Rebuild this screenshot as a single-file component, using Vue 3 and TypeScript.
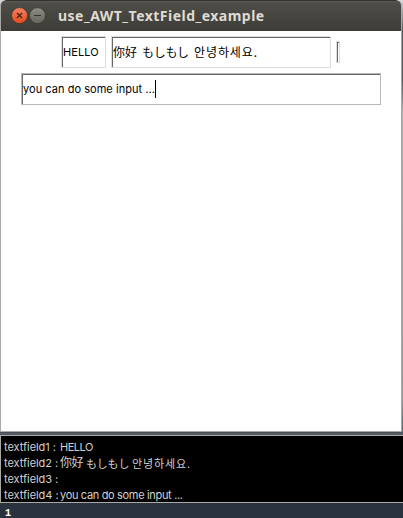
<script setup lang="ts">
interface LogPart { text: string; kind: string }
interface LogLine { name: string; parts: LogPart[] }

const greeting: LogPart[] = [
  { text: '你好', kind: 'han' },
  { text: 'もしもし', kind: 'kana' },
  { text: '안녕하세요.', kind: 'hangul' },
]
const sentence = 'you can do some input ...'
const lines: LogLine[] = [
  { name: 'textfield1 :', parts: [{ text: 'HELLO', kind: 'caps' }] },
  { name: 'textfield2 :', parts: greeting },
  { name: 'textfield3 :', parts: [] },
  { name: 'textfield4 :', parts: [{ text: sentence, kind: 'latin' }] },
]
</script>

<template>
  <div class="desktop">
    <div class="window">
      <header class="titlebar">
        <svg class="controls" width="36" height="18" viewBox="0 0 36 18">
          <defs>
            <linearGradient id="close" x1="0" y1="0" x2="0" y2="1">
              <stop offset="0" stop-color="#f58462" />
              <stop offset="1" stop-color="#df4a1b" />
            </linearGradient>
            <linearGradient id="min" x1="0" y1="0" x2="0" y2="1">
              <stop offset="0" stop-color="#8d8b83" />
              <stop offset="1" stop-color="#66645e" />
            </linearGradient>
          </defs>
          <circle cx="8.5" cy="8.6" r="8" fill="url(#close)" stroke="#34332e" stroke-width=".7" />
          <path d="M6 6l5 5M11 6l-5 5" stroke="#4a2117" stroke-width="1.3" />
          <circle cx="26.5" cy="8.6" r="8" fill="url(#min)" stroke="#34332e" stroke-width=".7" />
          <path d="M23 8.5h7" stroke="#35342f" stroke-width="1" />
        </svg>
        <h1 class="title">use_AWT_TextField_example</h1>
      </header>
      <main class="content">
        <div class="row">
          <div class="field first"><span class="caps">HELLO</span></div>
          <div class="field second">
            <span v-for="p in greeting" :key="p.kind" :class="p.kind">{{ p.text }}</span>
          </div>
          <div class="field tiny"></div>
        </div>
        <div class="field active"><span class="latin">{{ sentence }}</span><i class="caret"></i></div>
      </main>
    </div>
    <section class="console">
      <div v-for="line in lines" :key="line.name" class="line">
        <span class="name">{{ line.name }}</span>
        <span v-for="p in line.parts" :key="p.kind" :class="p.kind">{{ p.text }}</span>
      </div>
    </section>
    <footer class="status">1</footer>
  </div>
</template>

<style>
body { margin: 0; overflow: hidden; }
</style>

<style scoped>
* { box-sizing: border-box; }
.desktop {
  width: 403px;
  height: 518px;
  overflow: hidden;
  font-family: Inter, "Noto Sans CJK SC", sans-serif;
  font-size: 11px;
  color: #000;
  background: linear-gradient(#d5d9df 0, #55585b 30px, #55585b 80px, #aaa 110px, #999 400px, #505a66 435px);
}
.window {
  width: 402px;
  height: 432px;
  border: 1px solid #aaa8a5;
  border-top: 0;
  border-radius: 6px 6px 0 0;
  background: #fff;
  overflow: hidden;
  box-shadow: 0 1px 0 #4d5053;
}
.titlebar {
  display: flex;
  align-items: center;
  height: 31px;
  margin: 0 -1px;
  padding: 0 0 0 10px;
  border: 1px solid #34332f;
  border-bottom: 0;
  border-radius: 6px 6px 0 0;
  background: linear-gradient(#595852 0, #4d4c46 3px, #3d3c37 100%);
}
.controls { flex: none; }
.title {
  margin: 0 0 0 11px;
  font: bold 14px/20px "Noto Sans", sans-serif;
  letter-spacing: 0.48px;
  color: #dfdbd2;
  white-space: nowrap;
}
.content { padding: 5px 20px 0; }
.row { display: flex; align-items: center; gap: 5px; height: 32px; padding-left: 40px; }
.field {
  display: flex;
  align-items: center;
  height: 32px;
  border: 1px solid #dcdcdc;
  box-shadow: inset 1px 1px 0 #686868;
  white-space: pre;
}
.first { width: 45px; padding-left: 1px; }
.second { width: 220px; padding: 0 0 2px 1px; }
.tiny { width: 4px; height: 22px; }
.active { width: 360px; margin-top: 5px; padding-left: 1px; border-color: #b8b8b8; }
.caret { width: 1px; height: 18px; background: #000; }
.caps { letter-spacing: 0.1px; }
.latin { width: 132px; letter-spacing: 0.04px; }
.han { width: 29px; font-size: 12px; }
.kana { width: 52px; font-family: "Noto Sans CJK JP", sans-serif; font-size: 12px; letter-spacing: -0.3px; }
.hangul { font-family: "Noto Sans CJK KR", sans-serif; font-size: 12px; letter-spacing: 0.9px; }
.console {
  height: 68px;
  margin-top: 3px;
  padding: 3px 0 0 3px;
  border: 1px solid #aaa9a4;
  border-right: 0;
  background: #000;
  color: #d0d0d0;
  overflow: hidden;
}
.line { display: flex; height: 16px; line-height: 16px; white-space: pre; }
.name { width: 56px; flex: none; letter-spacing: -0.05px; }
.line .caps { letter-spacing: -0.5px; }
.line .latin { letter-spacing: -0.33px; }
.line .han { width: 26px; letter-spacing: -0.5px; }
.line .kana { width: 46px; font-size: 11px; letter-spacing: -0.2px; }
.line .hangul { font-size: 11px; letter-spacing: 0.9px; }
.status {
  height: 15px;
  padding-left: 5px;
  background: #29323d;
  color: #fff;
  font: bold 10px/22px "Liberation Mono", monospace;
}
</style>
